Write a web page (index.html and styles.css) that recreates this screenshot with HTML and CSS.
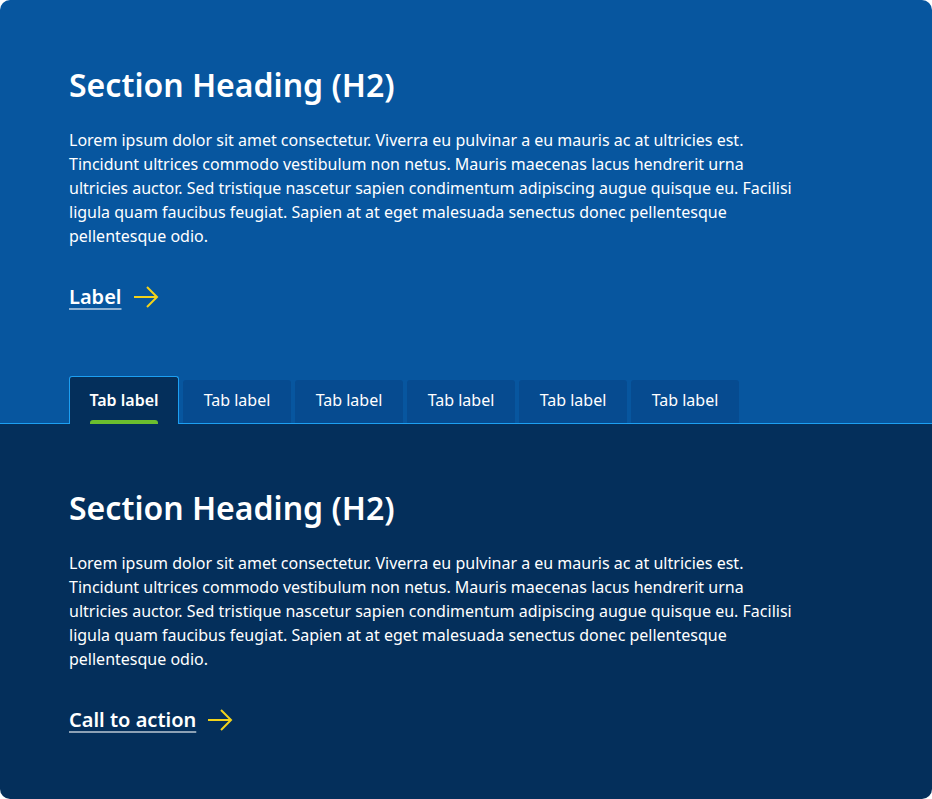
FILE: index.html
```html
<!DOCTYPE html>
<html lang="en">
<head>
<meta charset="utf-8">
<title>Section</title>
<link rel="stylesheet" href="styles.css">
</head>
<body>
<div class="card">
  <section class="top">
    <h2 class="heading">Section Heading (H2)</h2>
    <p class="body">Lorem ipsum dolor sit amet consectetur. Viverra eu pulvinar a eu mauris ac at ultricies est. Tincidunt ultrices commodo vestibulum non netus. Mauris maecenas lacus hendrerit urna ultricies auctor. Sed tristique nascetur sapien condimentum adipiscing augue quisque eu. Facilisi ligula quam faucibus feugiat. Sapien at at eget malesuada senectus donec pellentesque pellentesque odio.</p>
    <a class="link" href="#"><span class="link-text">Label</span>
      <svg class="arrow" width="26" height="24" viewBox="0 0 26 24" fill="none"><path d="M1 12H24M14 2L24 12L14 22" stroke="#F2D21B" stroke-width="2"/></svg>
    </a>
    <div class="tabs">
      <div class="tab active"><span>Tab label</span><i class="indicator"></i></div>
      <div class="tab">Tab label</div>
      <div class="tab">Tab label</div>
      <div class="tab">Tab label</div>
      <div class="tab">Tab label</div>
      <div class="tab">Tab label</div>
    </div>
  </section>
  <section class="bottom">
    <h2 class="heading">Section Heading (H2)</h2>
    <p class="body">Lorem ipsum dolor sit amet consectetur. Viverra eu pulvinar a eu mauris ac at ultricies est. Tincidunt ultrices commodo vestibulum non netus. Mauris maecenas lacus hendrerit urna ultricies auctor. Sed tristique nascetur sapien condimentum adipiscing augue quisque eu. Facilisi ligula quam faucibus feugiat. Sapien at at eget malesuada senectus donec pellentesque pellentesque odio.</p>
    <a class="link" href="#"><span class="link-text">Call to action</span>
      <svg class="arrow" width="26" height="24" viewBox="0 0 26 24" fill="none"><path d="M1 12H24M14 2L24 12L14 22" stroke="#F2D21B" stroke-width="2"/></svg>
    </a>
  </section>
</div>
</body>
</html>
```
FILE: styles.css
```css
* { box-sizing: border-box; }
html, body { margin: 0; padding: 0; background: #ffffff; }
body {
  font-family: "Noto Sans", "Open Sans", sans-serif;
  color: #ffffff;
}
.card {
  width: 932px;
  height: 799px;
  border-radius: 10px;
  overflow: hidden;
  display: flex;
  flex-direction: column;
}
.top {
  background: #07569F;
  padding: 65px 69px 0;
}
.bottom {
  background: #042F5B;
  padding: 64px 69px 0;
  flex: 1;
}
.heading {
  margin: 0;
  font-size: 32px;
  line-height: 40px;
  font-weight: 600;
}
.body {
  margin: 23px 0 0;
  max-width: 735px;
  font-size: 16px;
  line-height: 24px;
}
.link {
  margin-top: 35px;
  display: inline-flex;
  align-items: center;
  gap: 11px;
  color: #ffffff;
  text-decoration: none;
  font-size: 20px;
  line-height: 28px;
  font-weight: 600;
}
.link-text {
  text-decoration: underline;
  text-decoration-color: rgba(255, 255, 255, 0.55);
  text-decoration-thickness: 2px;
  text-underline-offset: 4px;
}
.arrow { display: block; }
.tabs {
  margin-top: 65px;
  display: flex;
  align-items: flex-end;
  gap: 4px;
  height: 48px;
  position: relative;
}
.tabs::after {
  content: "";
  position: absolute;
  left: -69px;
  right: -69px;
  bottom: 0;
  height: 1px;
  background: #1C9FF2;
}
.tab {
  width: 108px;
  height: 43px;
  margin-bottom: 1px;
  background: #064B90;
  border-radius: 3px 3px 0 0;
  font-size: 16px;
  line-height: 24px;
  display: flex;
  align-items: center;
  justify-content: center;
  padding-bottom: 4px;
}
.tab.active {
  width: 110px;
  height: 48px;
  margin-bottom: 0;
  background: #042F5B;
  border: 1px solid #1C9FF2;
  border-bottom: none;
  font-weight: 600;
  position: relative;
  z-index: 1;
  padding-bottom: 2px;
}
.indicator {
  position: absolute;
  left: 20px;
  width: 68px;
  bottom: 0;
  height: 4px;
  background: #6CBE2E;
  border-radius: 3px 3px 0 0;
}
```
